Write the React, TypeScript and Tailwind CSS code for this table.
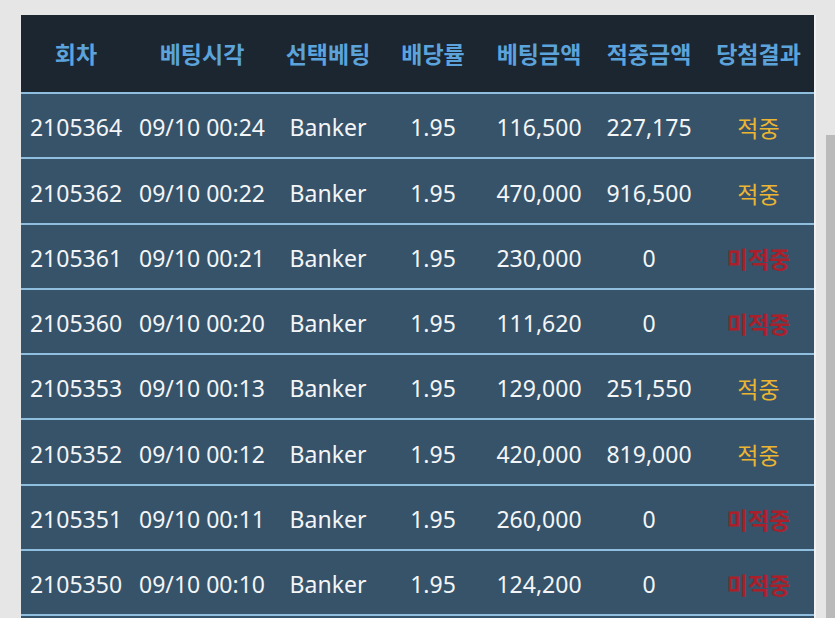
import React from "react";

type Bet = {
  round: string;
  time: string;
  pick: string;
  odds: string;
  amount: string;
  payout: string;
  win: boolean;
};

const bets: Bet[] = [
  { round: "2105364", time: "09/10 00:24", pick: "Banker", odds: "1.95", amount: "116,500", payout: "227,175", win: true },
  { round: "2105362", time: "09/10 00:22", pick: "Banker", odds: "1.95", amount: "470,000", payout: "916,500", win: true },
  { round: "2105361", time: "09/10 00:21", pick: "Banker", odds: "1.95", amount: "230,000", payout: "0", win: false },
  { round: "2105360", time: "09/10 00:20", pick: "Banker", odds: "1.95", amount: "111,620", payout: "0", win: false },
  { round: "2105353", time: "09/10 00:13", pick: "Banker", odds: "1.95", amount: "129,000", payout: "251,550", win: true },
  { round: "2105352", time: "09/10 00:12", pick: "Banker", odds: "1.95", amount: "420,000", payout: "819,000", win: true },
  { round: "2105351", time: "09/10 00:11", pick: "Banker", odds: "1.95", amount: "260,000", payout: "0", win: false },
  { round: "2105350", time: "09/10 00:10", pick: "Banker", odds: "1.95", amount: "124,200", payout: "0", win: false },
];

const headers = ["회차", "베팅시각", "선택베팅", "배당률", "베팅금액", "적중금액", "당첨결과"];

const cols = "grid grid-cols-[110px_142px_110px_100px_112px_108px_111px]";

const App = () => {
  return (
    <div className="relative h-[618px] overflow-hidden bg-[#e6e6e6] pt-[15px] pl-[21px] font-['Noto_Sans','Noto_Sans_CJK_KR',sans-serif]">
      <div className="w-[793px] border-r-2 border-[#f2f2f2] box-content">
        {/* header */}
        <div className={`${cols} h-[77px] items-center bg-[#1b2631] text-[23px] font-bold text-[#5ca3dc]`}>
          {headers.map((h) => (
            <div key={h} className="text-center font-['Noto_Sans_CJK_KR',sans-serif]">
              {h}
            </div>
          ))}
        </div>

        {bets.map((b) => (
          <div
            key={b.round}
            className={`${cols} h-[65.25px] items-center border-t-2 border-[#8fbedf] bg-[#36536a] pt-[4px] text-[23px] text-[#f3f5f7]`}
          >
            <div className="text-center">{b.round}</div>
            <div className="text-center">{b.time}</div>
            <div className="text-center">{b.pick}</div>
            <div className="text-center">{b.odds}</div>
            <div className="text-center">{b.amount}</div>
            <div className="text-center">{b.payout}</div>
            <div className="text-center font-['Noto_Sans_CJK_KR',sans-serif] text-[23px]">
              {b.win ? (
                <span className="text-[#ecb531]">적중</span>
              ) : (
                <span className="font-bold text-[#a91f2a]">미적중</span>
              )}
            </div>
          </div>
        ))}
        <div className="h-[10px] border-t-2 border-[#8fbedf] bg-[#36536a]" />
      </div>

      {/* page scrollbar */}
      <div className="absolute right-0 top-[135px] bottom-0 w-[9px] bg-[#bababa]" />
    </div>
  );
};

export default App;
